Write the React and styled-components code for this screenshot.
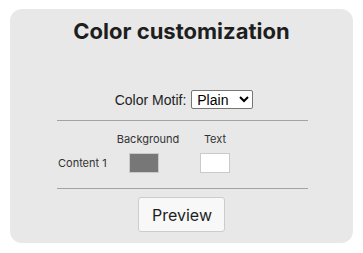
import React from "react";
import styled, { createGlobalStyle } from "styled-components";

const GlobalStyle = createGlobalStyle`
  body {
    margin: 0;
    padding: 9px 10px;
    background: #ffffff;
    font-family: Inter, "Liberation Sans", sans-serif;
  }
`;

const App = () => {
  return (
    <>
      <GlobalStyle />
      <Panel>
        <Title>Color customization</Title>

        <MotifRow>
          <MotifLabel htmlFor="motif">Color Motif:</MotifLabel>
          <MotifSelect id="motif" defaultValue="plain">
            <option value="plain">Plain</option>
          </MotifSelect>
        </MotifRow>

        <Divider />

        <ColorTable>
          <thead>
            <tr>
              <Head $width={56} />
              <Head $width={70}>Background</Head>
              <Head $width={64}>Text</Head>
            </tr>
          </thead>
          <tbody>
            <tr>
              <RowLabel>Content 1</RowLabel>
              <Cell $align="left">
                <Swatch $color="#777777" />
              </Cell>
              <Cell $align="center">
                <Swatch $color="#ffffff" />
              </Cell>
            </tr>
          </tbody>
        </ColorTable>

        <Divider $gap={15} />

        <Actions>
          <PreviewButton>Preview</PreviewButton>
        </Actions>
      </Panel>
    </>
  );
};

export default App;

/* styled-components */
const Panel = styled.section`
  box-sizing: border-box;
  width: 343px;
  height: 234px;
  background: #e8e8e8;
  border-radius: 12px;
  padding: 8px 47px 0;
  display: flex;
  flex-direction: column;
  align-items: stretch;
`;
const Title = styled.h1`
  margin: 0;
  text-align: center;
  font-family: Inter, "Liberation Sans", sans-serif;
  font-size: 22px;
  font-weight: 700;
  line-height: 28px;
  color: #1e1e1e;
`;
const MotifRow = styled.div`
  display: flex;
  justify-content: center;
  align-items: center;
  gap: 5px;
  margin-top: 45px;
  padding-left: 5px;
`;
const MotifLabel = styled.label`
  font-family: "Liberation Sans", Arial, sans-serif;
  font-size: 14px;
  color: #222;
`;
const MotifSelect = styled.select`
  font-family: "Liberation Sans", Arial, sans-serif;
  font-size: 14px;
  height: 19px;
  width: 62px;
  padding: 0 0 0 1px;
  border: 1px solid #767676;
  border-radius: 2px;
  background: #fff;
  color: #000;
`;
const Divider = styled.hr`
  margin: ${(p) => p.$gap ?? 11}px -2px 0 0;
  border: none;
  border-top: 1px solid #a3a3a3;
  height: 0;
`;
const ColorTable = styled.table`
  border-collapse: collapse;
  table-layout: fixed;
  width: 190px;
  margin: 11px 0 0 0;
  font-family: Inter, "Liberation Sans", sans-serif;
  font-size: 11px;
  color: #333;
`;
const Head = styled.th`
  width: ${(p) => p.$width}px;
  font-weight: 400;
  line-height: 14px;
  padding: 0 0 7px;
  text-align: center;
  white-space: nowrap;
`;
const RowLabel = styled.td`
  padding: 0 0 0 1px;
  white-space: nowrap;
`;
const Cell = styled.td`
  padding: 0 0 0 ${(p) => (p.$align === "left" ? 16 : 0)}px;
  text-align: ${(p) => p.$align};
  line-height: 0;
`;
const Swatch = styled.div`
  display: inline-block;
  vertical-align: middle;
  box-sizing: border-box;
  width: 30px;
  height: 20px;
  background: ${(p) => p.$color};
  border: 1px solid #cacaca;
`;
const Actions = styled.div`
  display: flex;
  justify-content: center;
  padding-top: 8px;
`;
const PreviewButton = styled.button`
  font-family: Inter, "Liberation Sans", sans-serif;
  font-size: 16px;
  color: #1e1e1e;
  background: #f8f8f8;
  border: 1px solid #cccccc;
  border-radius: 3px;
  padding: 0 13px;
  height: 35px;
  width: 87px;
  cursor: pointer;
`;
